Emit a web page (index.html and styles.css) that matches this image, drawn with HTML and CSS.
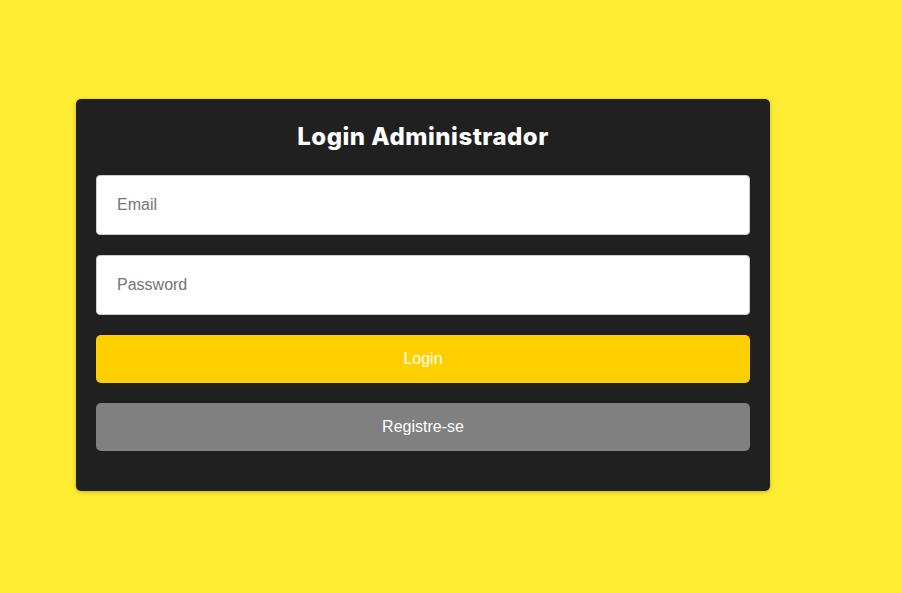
FILE: index.html
```html
<!DOCTYPE html>
<html lang="pt">
<head>
<meta charset="utf-8">
<title>Login Administrador</title>
<link rel="stylesheet" href="styles.css">
</head>
<body>
<div class="card">
  <h2 class="title">Login Administrador</h2>
  <form class="form">
    <input class="field" type="email" placeholder="Email">
    <input class="field" type="password" placeholder="Password">
    <button class="btn btn-login" type="button">Login</button>
    <button class="btn btn-register" type="button">Registre-se</button>
  </form>
</div>
</body>
</html>
```

FILE: styles.css
```css
html, body {
  margin: 0;
  height: 100%;
}
body {
  background: #ffed33;
  padding: 99px 0 0 76px;
  box-sizing: border-box;
  font-family: "Liberation Sans", Arial, sans-serif;
}
.card {
  width: 694px;
  box-sizing: border-box;
  background: #202020;
  border-radius: 5px;
  padding: 20px;
  box-shadow: 0 1px 4px rgba(0, 0, 0, 0.25);
}
.title {
  margin: 0 0 20px;
  height: 36px;
  line-height: 36px;
  text-align: center;
  color: #ffffff;
  font-family: Inter, "Noto Sans", sans-serif;
  font-weight: 800;
  font-size: 24px;
  letter-spacing: 0.5px;
}
.form {
  display: flex;
  flex-direction: column;
  gap: 20px;
  margin-bottom: 20px;
}
.field {
  height: 60px;
  box-sizing: border-box;
  border: 1px solid #cccccc;
  border-radius: 4px;
  background: #ffffff;
  padding: 0 20px;
  font-family: "Liberation Sans", Arial, sans-serif;
  font-size: 16px;
  color: #333;
  outline: none;
}
.field::placeholder {
  color: #757575;
}
.btn {
  height: 48px;
  border: none;
  border-radius: 5px;
  color: #ffffff;
  font-family: "Liberation Sans", Arial, sans-serif;
  font-size: 16px;
  cursor: pointer;
}
.btn-login {
  background: #ffd000;
}
.btn-register {
  background: #808080;
}
```
